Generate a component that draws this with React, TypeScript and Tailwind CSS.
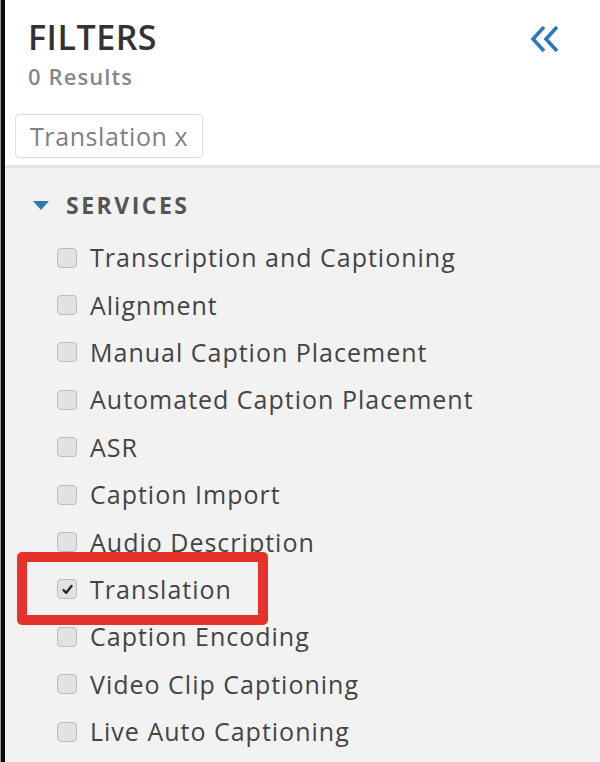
import React from "react";

const items = [
  "Transcription and Captioning",
  "Alignment",
  "Manual Caption Placement",
  "Automated Caption Placement",
  "ASR",
  "Caption Import",
  "Audio Description",
  "Translation",
  "Caption Encoding",
  "Video Clip Captioning",
  "Live Auto Captioning",
];

function Checkbox({ checked }: { checked?: boolean }) {
  return (
    <div className="w-[20px] h-[20px] rounded-[4px] border border-[#bdbdbd] bg-[#e2e2e2] flex items-center justify-center shrink-0">
      {checked && (
        <svg width="13" height="13" viewBox="0 0 13 13">
          <path d="M2.5 7 L5.2 9.8 L10.5 3" fill="none" stroke="#2a2a2a" strokeWidth="2.4" strokeLinecap="round" strokeLinejoin="round" />
        </svg>
      )}
    </div>
  );
}

export default function App() {
  return (
    <div
      className="relative w-[600px] h-[762px] flex overflow-hidden bg-white"
      style={{ fontFamily: '"Open Sans", "Liberation Sans", sans-serif' }}
    >
      <div className="w-[1px] bg-[#9a9a9a] shrink-0" />
      <div className="w-[4px] bg-[#0a0a0a] shrink-0" />
      <div className="flex-1 flex flex-col">
        <div className="bg-white pl-[23px] pr-[40px] pt-[20px] pb-[7px] border-b-[3px] border-[#e6e6e6]">
          <div className="flex items-start justify-between">
            <div className="text-[34px] leading-none font-semibold text-[#333] tracking-[0.5px]">FILTERS</div>
            <svg width="30" height="30" viewBox="0 0 30 30" className="mt-[5px]">
              <path d="M14 2 L3 14 L14 26" fill="none" stroke="#2b7bbb" strokeWidth="3.6" strokeLinejoin="miter" />
              <path d="M27 2 L16 14 L27 26" fill="none" stroke="#2b7bbb" strokeWidth="3.6" strokeLinejoin="miter" />
            </svg>
          </div>
          <div className="mt-[10px] text-[22px] leading-none font-semibold text-[#888] tracking-[1.1px]">0 Results</div>
          <div className="mt-[27px] -ml-[13px] inline-flex items-center h-[44px] px-[14px] border border-[#dedede] rounded-[4px] text-[25px] leading-none text-[#808080] tracking-[0.6px]">
            Translation x
          </div>
        </div>
        <div className="flex-1 bg-[#f2f2f2] pt-[26px]">
          <div className="flex items-center pl-[28px] h-[23px]">
            <svg width="16" height="9" viewBox="0 0 16 9">
              <path d="M0 0 L16 0 L8 9 Z" fill="#2b7bbb" />
            </svg>
            <span className="ml-[17px] text-[23px] leading-none font-bold text-[#555] tracking-[2.5px]">SERVICES</span>
          </div>
          <div className="mt-[17px] flex flex-col">
            {items.map((label) => (
              <div key={label} className="h-[47.4px] flex items-center pl-[52px]">
                <Checkbox checked={label === "Translation"} />
                <span className="ml-[13px] text-[25px] leading-none font-medium text-[#444] tracking-[1px]">{label}</span>
              </div>
            ))}
          </div>
        </div>
      </div>
      <div className="absolute left-[17px] top-[552px] w-[251px] h-[73px] border-[10px] border-[#e5322b] rounded-[5px]" />
    </div>
  );
}
